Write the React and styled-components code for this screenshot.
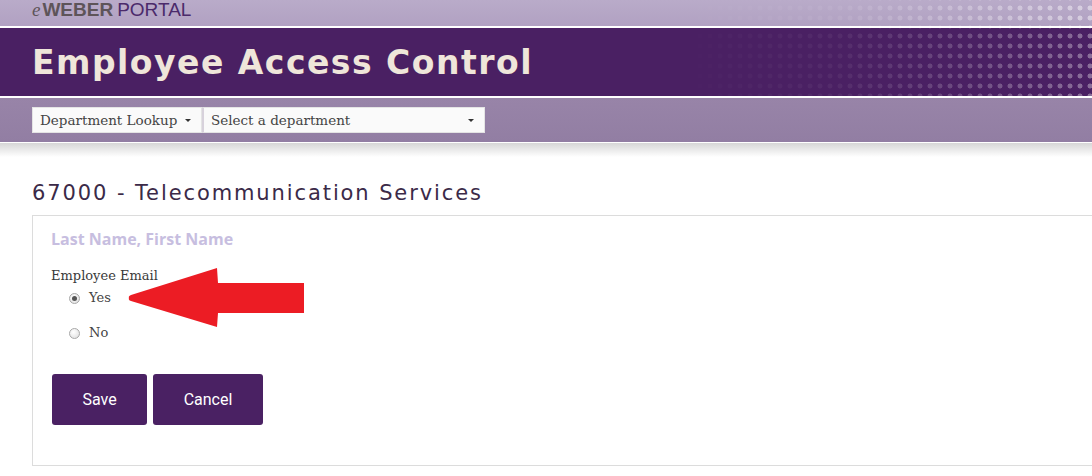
import styled, { createGlobalStyle } from "styled-components";
import { useState } from "react";

const GlobalStyle = createGlobalStyle`
  html, body {
    margin: 0;
    padding: 0;
    background: #ffffff;
    overflow: hidden;
  }
`;

const Page = styled.div`
  width: 1092px;
  height: 476px;
  overflow: hidden;
  position: relative;
`;

// dotted halftone that fades in toward the right side of the banners
const Halftone = styled.div`
  position: relative;
  overflow: hidden;

  &::after {
    content: "";
    position: absolute;
    top: 0;
    right: 0;
    bottom: 0;
    width: 420px;
    background-image: radial-gradient(
      circle,
      rgba(255, 255, 255, ${(p) => p.$alpha}) 2.2px,
      transparent 2.8px
    );
    background-size: 10px 10px;
    background-position: 3px 3px;
    -webkit-mask-image: linear-gradient(to right, transparent 0%, rgba(0, 0, 0, 0.15) 40%, #000 100%);
    mask-image: linear-gradient(to right, transparent 0%, rgba(0, 0, 0, 0.15) 40%, #000 100%);
    pointer-events: none;
  }
`;

const TopBar = styled(Halftone)`
  height: 26px;
  background: linear-gradient(#b9abc9, #b1a1c2);
  border-bottom: 2px solid #ffffff;
  padding-left: 32px;
  display: flex;
  align-items: flex-end;
`;

const Brand = styled.div`
  font-size: 19px;
  line-height: 19px;
  margin-bottom: 7px;
  white-space: nowrap;

  .e {
    font-family: "Liberation Serif", serif;
    font-style: italic;
    color: #5e5459;
    margin-right: 2px;
  }
  .weber {
    font-family: "Liberation Sans", Arial, sans-serif;
    font-weight: bold;
    color: #5e5459;
    margin-right: 4px;
  }
  .portal {
    font-family: "Liberation Sans", Arial, sans-serif;
    color: #4b2a6b;
  }
`;

const Header = styled(Halftone)`
  height: 68px;
  background: #4a2063;
  border-bottom: 2px solid #ffffff;
  padding-left: 32px;
  display: flex;
  align-items: center;
`;

const Title = styled.h1`
  margin: 0;
  font-family: "DejaVu Sans", sans-serif;
  font-weight: bold;
  font-size: 33px;
  letter-spacing: 1.5px;
  color: #efe6da;
  position: relative;
  z-index: 1;
`;

const ToolBar = styled.div`
  height: 45px;
  background: linear-gradient(#9884a8, #927ea3);
  border-bottom: 1px solid #ffffff;
  padding: 9px 32px 0;
  box-sizing: border-box;
  display: flex;
`;

const Shadow = styled.div`
  height: 14px;
  background: linear-gradient(#d6d6d6, #ffffff);
`;

const Select = styled.div`
  height: 26px;
  box-sizing: border-box;
  width: ${(p) => p.$width}px;
  background: #fafafa;
  border: 1px solid #e4e4e4;
  border-left: ${(p) => (p.$joined ? "2px solid #d8d2dc" : "1px solid #e4e4e4")};
  display: flex;
  align-items: center;
  justify-content: space-between;
  padding: 0 10px 0 7px;
  font-family: "DejaVu Serif", serif;
  font-size: 13.5px;
  color: #444444;

  .caret {
    width: 0;
    height: 0;
    border-left: 3px solid transparent;
    border-right: 3px solid transparent;
    border-top: 3px solid #333333;
    margin-top: 1px;
  }
`;

const Main = styled.div`
  padding: 23px 0 0 32px;
`;

const Heading = styled.h2`
  margin: 0 0 8px;
  font-family: "DejaVu Sans", sans-serif;
  font-weight: normal;
  font-size: 21px;
  line-height: 27px;
  letter-spacing: 1.9px;
  color: #3b2a48;
`;

const Card = styled.div`
  position: relative;
  width: 1100px;
  height: 251px;
  box-sizing: border-box;
  border: 1px solid #dcdcdc;
  padding: 12px 18px;
`;

const NameField = styled.div`
  font-family: "Open Sans", sans-serif;
  font-weight: bold;
  font-size: 16px;
  line-height: 22px;
  color: #c7bee0;
`;

const Label = styled.div`
  margin-top: 18px;
  font-family: "DejaVu Serif", serif;
  font-size: 13px;
  line-height: 16px;
  color: #3a3a3a;
`;

const Options = styled.div`
  display: flex;
  flex-direction: column;
  gap: 17px;
  padding: 5px 0 0 18px;
`;

const Option = styled.label`
  display: flex;
  align-items: center;
  gap: 9px;
  font-family: "DejaVu Serif", serif;
  font-size: 13px;
  line-height: 18px;
  color: #444444;
  cursor: pointer;
`;

const Radio = styled.span`
  width: 11px;
  height: 11px;
  box-sizing: border-box;
  border-radius: 50%;
  border: 1px solid #a8a8a8;
  background: radial-gradient(circle at 40% 35%, #ffffff, #dcdcdc);
  display: flex;
  align-items: center;
  justify-content: center;

  &::after {
    content: "";
    width: 5px;
    height: 5px;
    border-radius: 50%;
    background: ${(p) => (p.$checked ? "#555555" : "transparent")};
  }
`;

const Buttons = styled.div`
  display: flex;
  gap: 6px;
  margin-top: 32px;
  padding-left: 1px;
`;

const Button = styled.button`
  width: ${(p) => p.$width}px;
  height: 51px;
  border: none;
  border-radius: 3px;
  background: #4a2163;
  color: #ffffff;
  font-family: Roboto, "Liberation Sans", sans-serif;
  font-size: 16px;
  cursor: pointer;
`;

const Arrow = styled.svg`
  position: absolute;
  left: 95px;
  top: 51px;
`;

const App = () => {
  const [email, setEmail] = useState("yes");

  return (
    <Page>
      <GlobalStyle />
      <TopBar $alpha={0.45}>
        <Brand>
          <span className="e">e</span>
          <span className="weber">WEBER</span>
          <span className="portal">PORTAL</span>
        </Brand>
      </TopBar>

      <Header $alpha={0.35}>
        <Title>Employee Access Control</Title>
      </Header>

      <ToolBar>
        <Select $width={170}>
          <span>Department Lookup</span>
          <span className="caret" />
        </Select>
        <Select $width={283} $joined>
          <span>Select a department</span>
          <span className="caret" />
        </Select>
      </ToolBar>
      <Shadow />

      <Main>
        <Heading>67000 - Telecommunication Services</Heading>
        <Card>
          <NameField>Last Name, First Name</NameField>
          <Label>Employee Email</Label>
          <Options>
            <Option onClick={() => setEmail("yes")}>
              <Radio $checked={email === "yes"} />
              Yes
            </Option>
            <Option onClick={() => setEmail("no")}>
              <Radio $checked={email === "no"} />
              No
            </Option>
          </Options>
          <Buttons>
            <Button $width={95}>Save</Button>
            <Button $width={110}>Cancel</Button>
          </Buttons>

          {/* red callout arrow pointing at the Yes option */}
          <Arrow width="178" height="62" viewBox="0 0 178 62">
            <path
              d="M1 31 Q0 29 3 28 L89 1 L90 16 L176 16 L176 46 L90 46 L89 60 L3 34 Q0 33 1 31 Z"
              fill="#ec1c24"
            />
          </Arrow>
        </Card>
      </Main>
    </Page>
  );
};

export default App;
